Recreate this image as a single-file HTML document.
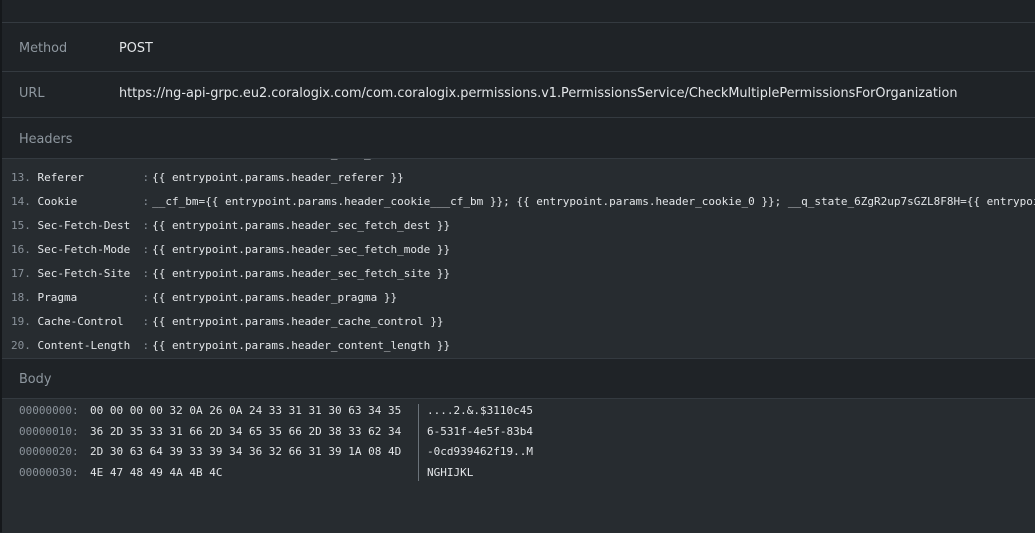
<!DOCTYPE html>
<html><head><style>
body{margin:0;width:1035px;height:532px;background:#1f2327;overflow:hidden;font-family:"DejaVu Sans","Liberation Sans",sans-serif;position:relative}
.strip{position:absolute;left:0;top:0;width:2px;height:532px;background:#15181b}
.hl{position:absolute;left:2px;right:0;height:1px;background:#343a40}
.lbl{position:absolute;left:19px;color:#8e979f;font-size:12.85px}
.val{position:absolute;left:119px;color:#e3e6e9;font-size:12.85px}
.area{position:absolute;left:2px;right:0;background:#272c30}
.mono{font-family:"DejaVu Sans Mono","Liberation Mono",monospace;font-size:11px;white-space:pre;position:absolute}
.n{color:#8a929a}.k{color:#e3e6e9}
.nm{display:inline-block;width:105px}
.c{color:#8a929a;margin-right:3px}
.o{color:#8a929a;display:inline-block;width:71px}
</style></head><body>
<div class="strip"></div>
<div class="hl" style="top:22px"></div>
<div class="lbl" style="top:41px">Method</div><div class="val" style="top:41px">POST</div>
<div class="hl" style="top:71px"></div>
<div class="lbl" style="top:86px">URL</div><div class="val" style="top:86px">https://ng-api-grpc.eu2.coralogix.com/com.coralogix.permissions.v1.PermissionsService/CheckMultiplePermissionsForOrganization</div>
<div class="hl" style="top:117px"></div>
<div class="lbl" style="top:132px">Headers</div>
<div class="area" style="top:158px;height:199px;border-top:1px solid #343a40;border-bottom:1px solid #343a40;overflow:hidden">
<div class="mono k" style="left:9px;top:-17px;line-height:24px"><span class="n">12.</span> <span class="nm">User-Agent</span><span class="c">:</span>{{ entrypoint.params.header_user_agent }}
<span class="n">13.</span> <span class="nm">Referer</span><span class="c">:</span>{{ entrypoint.params.header_referer }}
<span class="n">14.</span> <span class="nm">Cookie</span><span class="c">:</span>__cf_bm={{ entrypoint.params.header_cookie___cf_bm }}; {{ entrypoint.params.header_cookie_0 }}; __q_state_6ZgR2up7sGZL8F8H={{ entrypoint.params.header_cookie_q }}
<span class="n">15.</span> <span class="nm">Sec-Fetch-Dest</span><span class="c">:</span>{{ entrypoint.params.header_sec_fetch_dest }}
<span class="n">16.</span> <span class="nm">Sec-Fetch-Mode</span><span class="c">:</span>{{ entrypoint.params.header_sec_fetch_mode }}
<span class="n">17.</span> <span class="nm">Sec-Fetch-Site</span><span class="c">:</span>{{ entrypoint.params.header_sec_fetch_site }}
<span class="n">18.</span> <span class="nm">Pragma</span><span class="c">:</span>{{ entrypoint.params.header_pragma }}
<span class="n">19.</span> <span class="nm">Cache-Control</span><span class="c">:</span>{{ entrypoint.params.header_cache_control }}
<span class="n">20.</span> <span class="nm">Content-Length</span><span class="c">:</span>{{ entrypoint.params.header_content_length }}</div>
</div>
<div class="lbl" style="top:372px">Body</div>
<div class="area" style="top:398px;height:134px;border-top:1px solid #343a40">
<div class="mono k" style="left:17px;top:2px;line-height:20.7px"><span class="o">00000000:</span>00 00 00 00 32 0A 26 0A 24 33 31 31 30 63 34 35
<span class="o">00000010:</span>36 2D 35 33 31 66 2D 34 65 35 66 2D 38 33 62 34
<span class="o">00000020:</span>2D 30 63 64 39 33 39 34 36 32 66 31 39 1A 08 4D
<span class="o">00000030:</span>4E 47 48 49 4A 4B 4C</div>
<div style="position:absolute;left:416px;top:5px;width:1px;height:77px;background:#6b737a"></div>
<div class="mono k" style="left:425px;top:2px;line-height:20.7px">....2.&amp;.$3110c45
6-531f-4e5f-83b4
-0cd939462f19..M
NGHIJKL</div>
</div>
</body></html>
